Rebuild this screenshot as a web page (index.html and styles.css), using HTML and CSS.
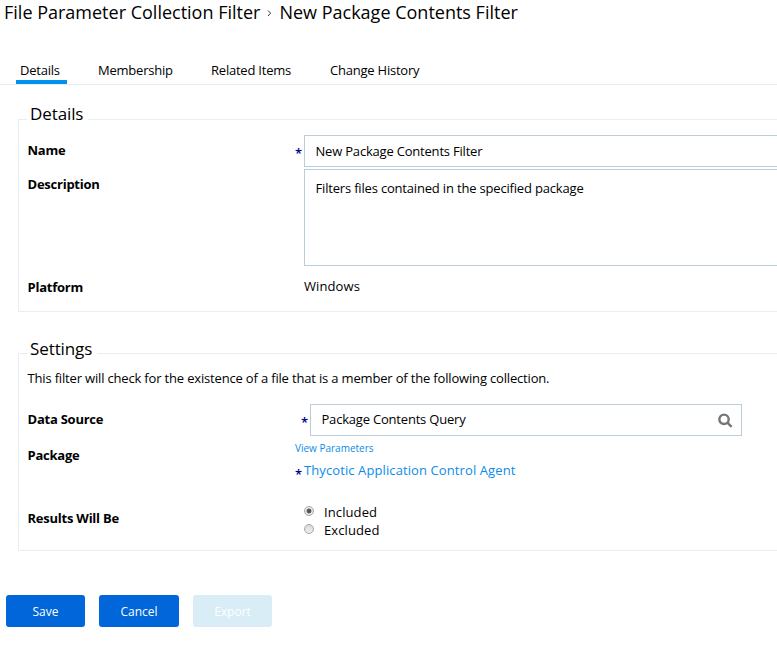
FILE: index.html
```html
<!DOCTYPE html>
<html lang="en">
<head>
<meta charset="utf-8">
<title>New Package Contents Filter</title>
<link rel="stylesheet" href="styles.css">
</head>
<body>
<header class="breadcrumb">
  <span class="crumb-parent">File Parameter Collection Filter</span>
  <svg class="crumb-sep" viewBox="0 0 5 8"><path d="M1 1.5l2.6 2.7L1 7"/></svg>
  <span class="crumb-current">New Package Contents Filter</span>
</header>
<nav class="tabs">
  <a class="tab active">Details</a>
  <a class="tab">Membership</a>
  <a class="tab">Related Items</a>
  <a class="tab">Change History</a>
</nav>
<main>
  <section class="panel details">
    <h2 class="legend">Details</h2>
    <div class="row name-row">
      <div class="label">Name</div>
      <div class="req">*</div>
      <div class="input">New Package Contents Filter</div>
    </div>
    <div class="row description-row">
      <div class="label">Description</div>
      <div class="req"></div>
      <div class="input textarea">Filters files contained in the specified package</div>
    </div>
    <div class="row platform-row">
      <div class="label">Platform</div>
      <div class="req"></div>
      <div class="value">Windows</div>
    </div>
  </section>
  <section class="panel settings">
    <h2 class="legend">Settings</h2>
    <p class="intro">This filter will check for the existence of a file that is a member of the following collection.</p>
    <div class="row source-row">
      <div class="label">Data Source</div>
      <div class="req">*</div>
      <div class="input search"><span class="search-text">Package Contents Query</span>
        <svg class="search-icon" viewBox="0 0 16 16"><circle cx="7" cy="6.3" r="4.7"/><path d="M10.4 9.7l4.2 4.2"/></svg>
      </div>
    </div>
    <div class="row package-row">
      <div class="label">Package</div>
      <div class="package">
        <a class="params">View Parameters</a>
        <div class="agent-line"><span class="req">*</span><a class="agent">Thycotic Application Control Agent</a></div>
      </div>
    </div>
    <div class="row results-row">
      <div class="label">Results Will Be</div>
      <div class="options">
        <div class="option"><span class="radio checked"></span><span class="included">Included</span></div>
        <div class="option"><span class="radio"></span><span class="excluded">Excluded</span></div>
      </div>
    </div>
  </section>
</main>
<footer class="actions">
  <button class="btn save">Save</button>
  <button class="btn cancel">Cancel</button>
  <button class="btn export" disabled>Export</button>
</footer>
</body>
</html>
```
FILE: styles.css
```css
* { box-sizing: border-box; }
body {
  margin: 0;
  width: 777px;
  height: 657px;
  overflow: hidden;
  background: #fff;
  color: #000;
  font: 13px/18px "Open Sans", sans-serif;
}
.breadcrumb {
  display: flex;
  align-items: center;
  height: 26px;
  padding: 0 0 2px 4px;
  font-size: 18px;
  line-height: 24px;
  white-space: nowrap;
}
.crumb-sep {
  width: 5px;
  height: 8px;
  margin: 2px 7px 0 7px;
  fill: none;
  stroke: #333;
}
.tabs {
  display: flex;
  height: 59px;
  padding: 35px 0 0 16px;
  border-bottom: 1px solid #e4ebf1;
  letter-spacing: -0.22px;
}
.tab {
  height: 23px;
  padding: 0 4px;
  white-space: nowrap;
}
.tab:nth-child(1) { width: 51px; margin-right: 27px; }
.tab:nth-child(2) { width: 83px; margin-right: 30px; }
.tab:nth-child(3) { width: 89px; margin-right: 30px; }
.tab.active { border-bottom: 4px solid #0091ea; }
.panel {
  width: 780px;
  margin-left: 18px;
  border: 1px solid #e9eef3;
  padding-left: 9px;
}
.details { height: 193px; margin-top: 34px; }
.settings { height: 198px; margin-top: 41px; }
.legend {
  width: max-content;
  height: 24px;
  margin: -18px 0 0 -1px;
  padding: 0 5px 0 3px;
  background: #fff;
  font-size: 17px;
  font-weight: 400;
  line-height: 24px;
  letter-spacing: -0.1px;
}
.settings .legend { margin-top: -17px; }
.row { display: flex; }
.label {
  width: 267px;
  flex: none;
  margin-left: -0.5px;
  margin-right: 0.5px;
  font-weight: 700;
  letter-spacing: -0.24px;
}
.req { width: 9px; flex: none; color: #00008b; font-weight: 600; }
.input {
  width: 500px;
  height: 32px;
  border: 1px solid #bdccd9;
  padding: 6px 11px 0 10.5px;
  letter-spacing: -0.2px;
  white-space: nowrap;
}
.name-row { height: 34px; margin-top: 9px; }
.name-row .label { padding-top: 6px; }
.name-row .req { padding-top: 9px; }
.description-row { height: 97px; }
.description-row .label { padding-top: 6px; }
.textarea { height: 97px; padding-top: 9px; letter-spacing: -0.18px; }
.platform-row { padding-top: 12px; }
.platform-row .value { margin-top: -1px; letter-spacing: 0.1px; }
.intro { margin: 8px 0 0 -0.5px; letter-spacing: -0.17px; white-space: nowrap; }
.source-row { height: 32px; margin-top: 17px; }
.source-row .label { width: 273px; padding-top: 6px; }
.source-row .req { padding-top: 9px; }
.search {
  display: flex;
  justify-content: space-between;
  width: 432px;
  padding-top: 5px;
  padding-right: 8px;
}
.search-icon {
  width: 16px;
  height: 16px;
  margin-top: 3px;
  fill: none;
  stroke: #777;
  stroke-width: 2.4;
}
.package-row { margin-top: 6px; height: 60px; }
.package-row .label { padding-top: 4px; }
.params, .agent { color: #0c8ce9; white-space: nowrap; }
.params { display: block; margin-top: -1px; font-size: 10px; line-height: 14px; }
.agent { letter-spacing: 0.1px; }
.agent-line { display: flex; margin-top: 6px; }
.agent-line .req { padding-top: 4px; }
.results-row .label { width: 276px; padding-top: 7px; }
.option { display: flex; align-items: center; height: 18px; letter-spacing: 0.1px; }
.options { padding-top: 1px; }
.radio {
  width: 10px;
  height: 10px;
  margin: -3px 10px 0 0;
  border: 1px solid #a6a6a6;
  border-radius: 50%;
  background: linear-gradient(#d9d9d9, #eee);
}
.radio.checked {
  background: radial-gradient(circle, #555 0 2px, #e6e6e6 2.8px);
}
.actions { display: flex; gap: 14px; padding: 44px 0 0 6px; }
.btn {
  width: 79px;
  height: 32px;
  padding: 2px 0 0;
  border: 0;
  border-radius: 3px;
  background: #0066d9;
  color: #fff;
  font: 12px/30px "Open Sans", sans-serif;
}
.btn.cancel { width: 80px; }
.btn.export { background: #d9edf7; }
```
